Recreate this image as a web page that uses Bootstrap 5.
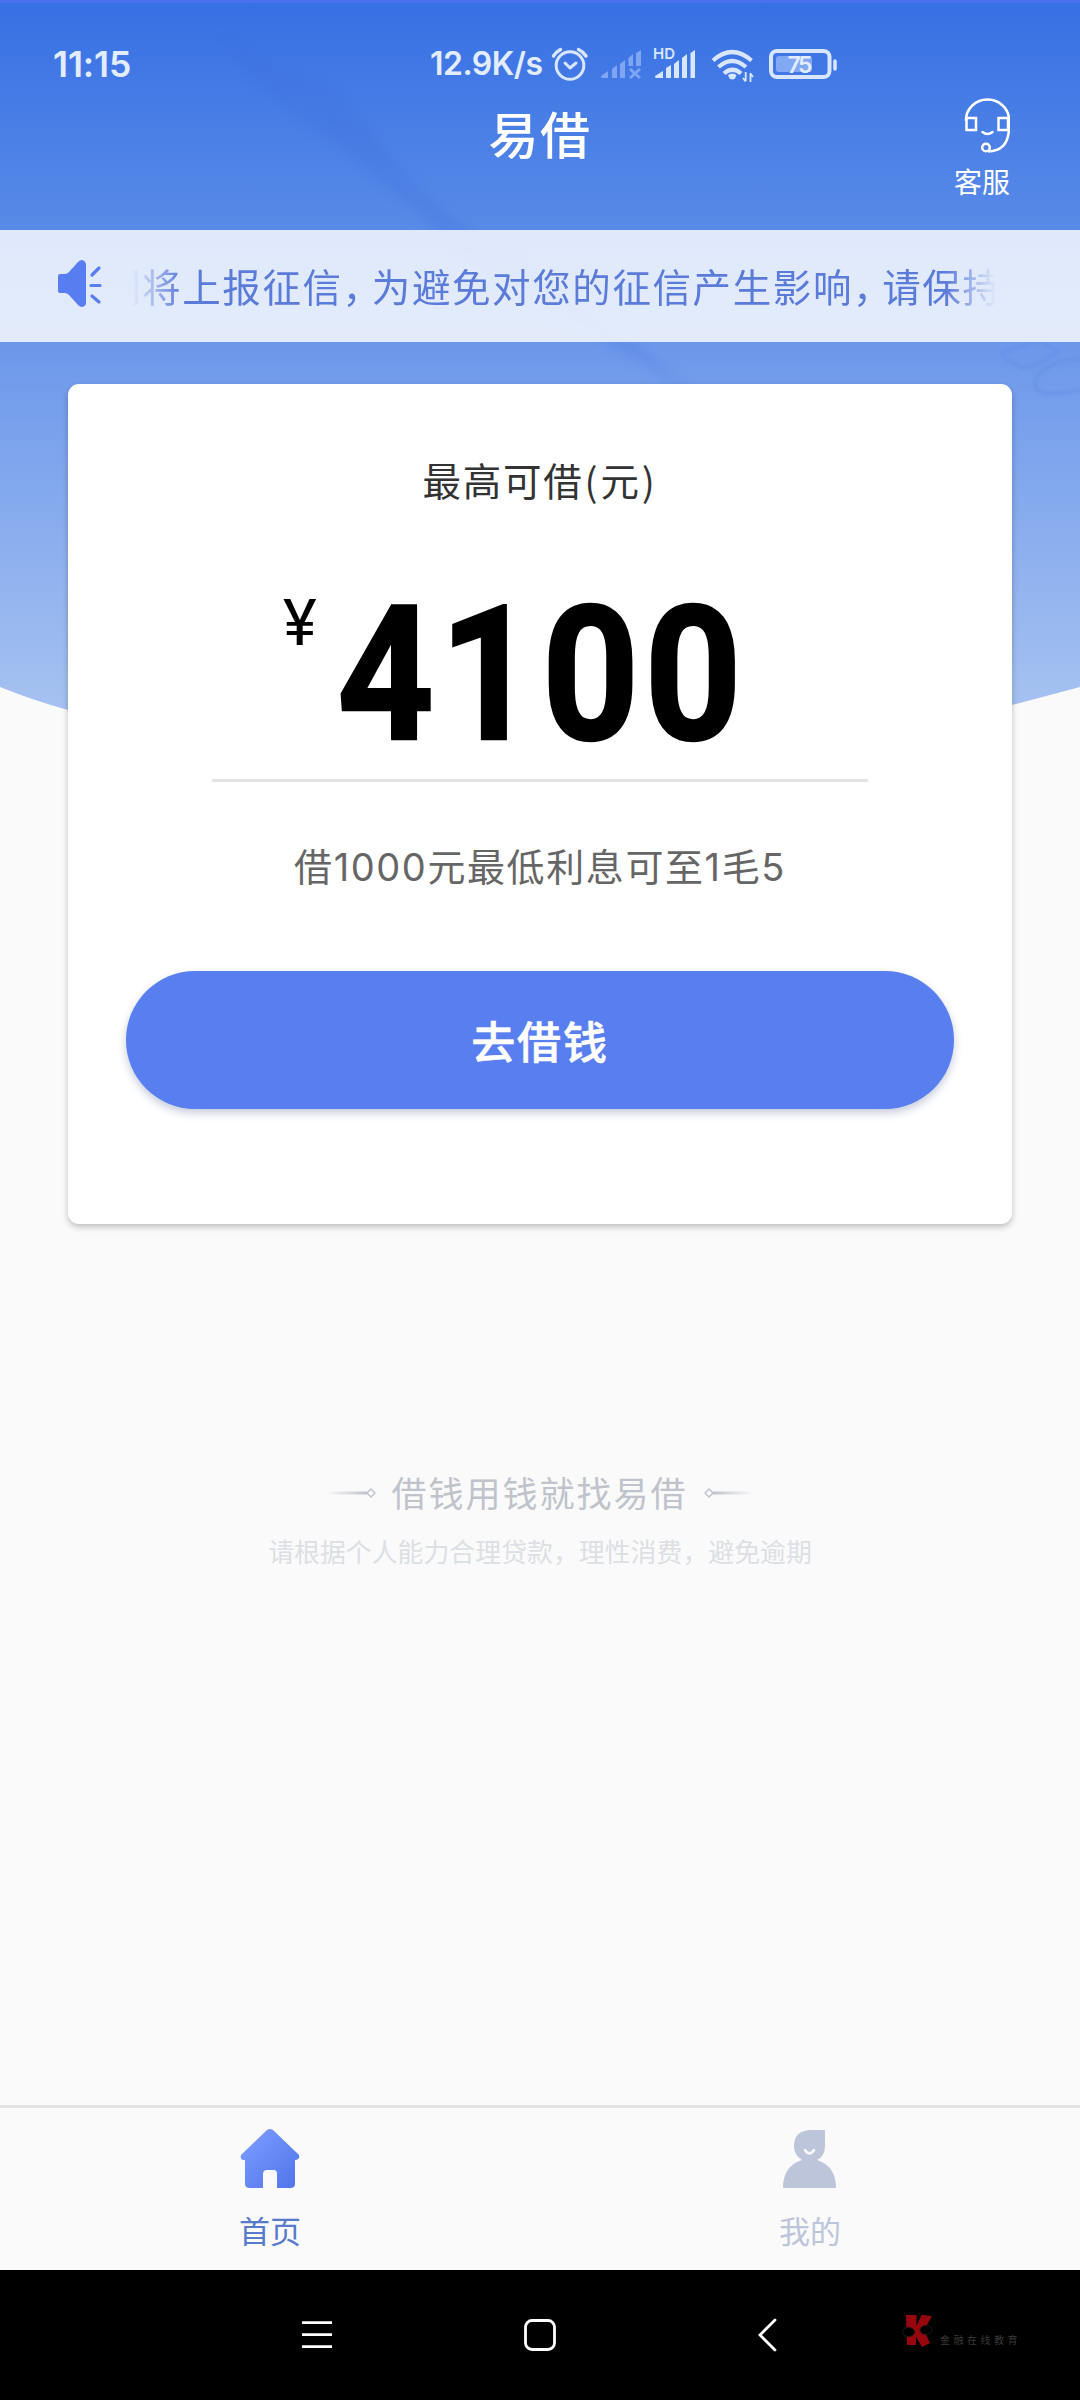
<!DOCTYPE html>
<html lang="zh-CN">
<head>
<meta charset="utf-8">
<meta name="viewport" content="width=device-width, initial-scale=1">
<title>易借</title>
<link href="https://cdn.jsdelivr.net/npm/bootstrap@5.3.0/dist/css/bootstrap.min.css" rel="stylesheet">
<style>
body{width:1080px;height:2400px;background:#fafafa;font-family:"Noto Sans CJK SC",sans-serif;overflow:hidden;line-height:1}
svg{display:block;flex:none}
.backdrop{left:0;top:0;z-index:0}
.app{z-index:1;height:2400px}
.status{height:94px;padding:35px 0 0 53px;color:#e2edff;font-family:Inter,sans-serif;font-weight:600}
.clock{font-size:35.5px;line-height:60px;width:377px;letter-spacing:-.1px}
.speed{font-size:32px;line-height:58px;width:117px;letter-spacing:-.5px}
.status svg{margin-top:5px}
.appbar{height:136px}
.app-title{font-size:50px;line-height:76px;letter-spacing:1.5px;color:#fff;font-weight:500}
.service{right:67px;top:4px;color:#fff;width:62px}
.service svg{margin-left:10px}
.service-text{font-size:28px;line-height:36px;margin-top:9px}
.notice{height:112px;background:rgba(255,255,255,.81);padding-left:57px}
.notice svg{margin-top:-5px}
.marquee{width:864px;margin:-3px 0 0 29px;height:60px;line-height:60px;font-size:38.5px;letter-spacing:1.6px;color:#5b7bd9;white-space:nowrap;overflow:hidden;-webkit-mask-image:linear-gradient(90deg,transparent,#000 50px,#000 814px,transparent)}
.marquee b{font-weight:400;letter-spacing:-9.3px}
.marquee span{display:inline-block;margin-left:-30px}
.loan{margin:42px 68px 0;height:840px;border:0;border-radius:11px;box-shadow:0 3px 6px rgba(0,0,0,.24)}
.loan-label{font-size:38.5px;letter-spacing:1.8px;line-height:60px;margin-top:65px;color:#333}
.loan-label i{font-style:normal;margin:0 1px}
.amount{margin-top:71px;height:158px;padding-left:215px;color:#000}
.yen{font-family:Roboto,sans-serif;font-size:64px;line-height:64px;width:54px;padding-top:12px}
.digits{font-family:Roboto,sans-serif;font-weight:700;font-size:188px;line-height:190px;transform-origin:0 0;transform:scaleX(.9);letter-spacing:6px;-webkit-text-stroke:2.5px #000}
.rule{width:656px;height:3px;background:#e4e4e4;margin-top:41px}
.rate{font-family:Inter,"Noto Sans CJK SC",sans-serif;font-size:38px;letter-spacing:1.6px;line-height:60px;margin-top:55px;color:#666}
.go{width:828px;height:138px;margin-top:74px;border:0;border-radius:69px;background:#587ef0;color:#fff;font-size:44px;font-weight:500;letter-spacing:1.9px;-webkit-text-stroke:.6px #fff;box-shadow:0 4px 8px rgba(50,70,130,.28)}
.slogan{margin-top:239px;height:60px;color:#bfc3cc;font-size:35px;letter-spacing:2px}
.slogan span{margin:-4px 0 0 -1px}
.tip{font-size:25.9px;line-height:40px;color:#dcdfe4;margin-top:8px}
.tabs{height:165px;border-top:3px solid #e4e4e4;background:#fafafa}
.tab-item{font-size:31px;line-height:44px;color:#587acb}
.tab-item svg{margin-top:20px;margin-bottom:18px}
.tab-item.tab-off{color:#bdc5da}
.sysnav{height:130px;background:#000}
.stamp{left:940px;top:65px;color:#3a3a3a;font-size:10px;letter-spacing:3.5px}
</style>
<script src="https://cdn.jsdelivr.net/npm/bootstrap@5.3.0/dist/js/bootstrap.bundle.min.js"></script>
</head>
<body>
<svg class="backdrop position-absolute" width="1080" height="800" viewBox="0 0 1080 800">
 <defs><linearGradient id="sky" x1="0" y1="0" x2="0" y2="710" gradientUnits="userSpaceOnUse"><stop offset="0" stop-color="#3770e4"/><stop offset=".32" stop-color="#588ae7"/><stop offset=".5" stop-color="#6e99eb"/><stop offset="1" stop-color="#a6c2f1"/></linearGradient>
 <filter id="soft"><feGaussianBlur stdDeviation="6"/></filter><filter id="haze"><feGaussianBlur stdDeviation="1.5"/></filter></defs>
 <path d="M0 0H1080V687L1012 705Q540 870 68 710Q32 700 0 687Z" fill="url(#sky)"/>
 <path d="M215 30Q250 80 330 140T450 245L610 345 690 390 640 345Q570 300 485 240T370 130 260 60Z" fill="#3d69d8" opacity=".2" filter="url(#soft)"/>
 <rect width="1080" height="3" fill="#4a70f0"/>
 <g fill="none" stroke="#5d88e2" stroke-width="4" opacity=".35" filter="url(#haze)"><path d="M1002 352q-2 6 22 16 10 0 34-17l-18-10zM1080 358q-38 4-45 24-2 18 45 8"/></g>
</svg>
<div class="app position-relative d-flex flex-column">
 <header>
  <div class="status d-flex">
   <div class="clock">11:15</div><div class="speed">12.9K/s</div>
   <svg width="300" height="50" viewBox="547 40 300 50" fill="none" stroke="#d8e6ff">
    <circle cx="570" cy="65.500" r="13.800" stroke-width="3"/><path d="M565 63l5 5 6-5" stroke-width="3" stroke-linecap="round" stroke-linejoin="round"/><path d="M553.500 56q2.500-4 7-6.500M586 56q-3-4.500-7.500-6.500" stroke-width="3.500" stroke-linecap="round"/>
    <g fill="#7fa5f3" stroke="none"><path d="M601 76l7-5v7h-6q-1 0-1-2M612 69l5-4v13h-5M620 64l5-4v18h-5M628.500 58l4.500-4v12h-4.500M636 53l5-3v16h-5"/></g><path d="M630 69l10 9M640 69l-10 9" stroke="#7fa5f3" stroke-width="3"/>
    <g fill="#d8e6ff" stroke="none"><path d="M655 76l8-5v7h-7q-1 0-1-2M666 68l5-3v13h-5M674 64l5-4v18h-5M682 58l5-4v24h-5M690.500 53l4.500-3v28h-4.500"/></g>
    <text x="653" y="59" font-size="15" font-family="Inter,sans-serif" font-weight="600" fill="#d8e6ff" stroke="none">HD</text>
    <g stroke-width="4.200"><path d="M713 60.500q19-17 38.500 0M718.500 67q13.500-12 27.500 0M724 73.500q8.500-7.500 17 0"/></g><path d="M728 75q4.500-3 8.500 0l-1.500 3.500q-2.500 2-5.500 0z" fill="#d8e6ff" stroke="none"/><path d="M745.700 72v9M750.500 73v9M743 78l2.500 3.500M753 77l-2.500-3.500" stroke-width="1.800"/>
    <rect x="771" y="51" width="58.500" height="26" rx="6" stroke-width="4"/><rect x="776" y="56" width="36" height="16" rx="3" fill="#83a8f3" stroke="none"/><path d="M835 61v8" stroke-width="3.500" stroke-linecap="round"/>
    <text x="787.500" y="72.500" font-size="23" textLength="25" font-family="Inter,sans-serif" font-weight="600" fill="#e2edff" stroke="none">75</text>
   </svg>
  </div>
  <div class="appbar position-relative d-flex justify-content-center">
   <div class="app-title">易借</div>
   <div class="service position-absolute d-flex flex-column align-items-center">
    <svg width="46" height="56" viewBox="965 99 46 56" fill="none" stroke="#fff" stroke-width="2.500"><path d="M967 122v-1a21.500 20.500 0 0 1 43 0v9q-1 22-21 22.500"/><rect x="967.500" y="119" width="9.500" height="12"/><rect x="999.500" y="119" width="9.500" height="12"/><path d="M983.500 133q5 4 10 0" stroke-linecap="round"/><circle cx="987" cy="148.500" r="3.800"/></svg>
    <div class="service-text">客服</div>
   </div>
  </div>
 </header>
 <div class="notice d-flex align-items-center">
  <svg width="46" height="50" viewBox="57 257 46 50"><path d="M58 274q0-2 2-2h5q2 0 4-2l9-10q2-2 4-2 4 1 4 5v38q0 3-4 4-2 0-4-2l-9-10q-2-2-4-2h-5q-2 0-2-2z" fill="#587df0"/><path d="M92 273l7-7M91 283.500h9M92 294l7 6" stroke="#587df0" stroke-width="3.200" stroke-linecap="round"/></svg>
  <div class="marquee"><span>们将上报征信<b>，</b>为避免对您的征信产生影响<b>，</b>请保持</span></div>
 </div>
 <main class="flex-grow-1">
  <section class="loan card align-items-center">
   <div class="loan-label">最高可借<i>(</i>元<i>)</i></div>
   <div class="amount d-flex align-self-start"><span class="yen">¥</span><span class="digits">4100</span></div>
   <div class="rule"></div>
   <div class="rate">借1000元最低利息可至1毛5</div>
   <button class="go btn p-0">去借钱</button>
  </section>
  <div class="slogan d-flex justify-content-center align-items-center gap-3">
   <svg width="50" height="12"><defs><linearGradient id="fade"><stop stop-color="#bfc3cc" stop-opacity="0"/><stop offset="1" stop-color="#bfc3cc"/></linearGradient></defs><rect y="4.500" width="41" height="3" fill="url(#fade)"/><path d="M45 2l4 4-4 4-4-4z" fill="none" stroke="#bfc3cc" stroke-width="1.500"/></svg>
   <span>借钱用钱就找易借</span>
   <svg width="50" height="12"><g transform="matrix(-1 0 0 1 50 0)"><rect y="4.500" width="41" height="3" fill="url(#fade)"/><path d="M45 2l4 4-4 4-4-4z" fill="none" stroke="#bfc3cc" stroke-width="1.500"/></g></svg>
  </div>
  <div class="tip text-center">请根据个人能力合理贷款，理性消费，避免逾期</div>
 </main>
 <nav class="tabs d-flex">
  <div class="tab-item col-6 d-flex flex-column align-items-center">
   <svg width="60" height="62" viewBox="240 2128 60 62"><defs><linearGradient id="roof" x1="0" y1="0" x2="1" y2="1"><stop offset=".2" stop-color="#7596fd"/><stop offset="1" stop-color="#4f74e9"/></linearGradient></defs><path d="M267 2130q3-2 6 0l25 24q2 2 1 4-1 2-4 2v24q0 4-5 4h-13v-14q0-4-3-4h-7q-4 0-4 4v14h-13q-5 0-5-4v-24q-4 0-4-2-1-2 1-4z" fill="url(#roof)"/></svg>
   <span>首页</span></div>
  <div class="tab-item tab-off col-6 d-flex flex-column align-items-center">
   <svg width="54" height="62" viewBox="783 2128 54 62"><path d="M810 2130h15v16q0 10-8 14 19 6 19 28h-53q0-22 19-28-8-5-8-14 0-15 16-16z" fill="#bdc5da"/><path d="M805 2150q4.500 7 9 0" fill="none" stroke="#fafafa" stroke-width="2.500" stroke-linecap="round"/></svg>
   <span>我的</span></div>
 </nav>
 <div class="sysnav position-relative">
  <svg width="1080" height="130" viewBox="0 2270 1080 130" fill="none" stroke="#fff" stroke-width="2.800"><path d="M302 2322.700h30M302 2334.700h30M302 2346.700h30"/><rect x="525.500" y="2320.500" width="29" height="29" rx="6.500"/><path d="M775 2320l-15 15 15 15" stroke-linecap="round"/>
  <path d="M906 2315h10.500v11l5-11 10.500 1-8 14 6 13-8 4-6-10v8h-9z" fill="#98060d" stroke="none"/><g fill="#000" stroke="#1a1a1a" stroke-width="1"><ellipse cx="908.500" cy="2332" rx="6" ry="4.500"/><ellipse cx="926" cy="2330" rx="6" ry="4.500"/></g></svg>
  <div class="stamp position-absolute">金融在线教育</div>
 </div>
</div>
</body>
</html>
